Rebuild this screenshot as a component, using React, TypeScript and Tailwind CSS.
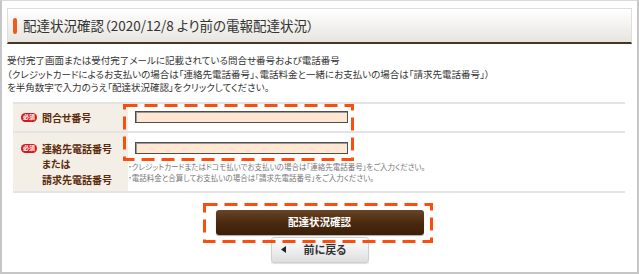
import React from "react";

const jp = "[font-family:'Noto_Sans_CJK_JP','Noto_Sans',sans-serif] [font-feature-settings:'palt']";

const Dashed = ({ className }: { className: string }) => (
  <svg className={`pointer-events-none absolute ${className}`} xmlns="http://www.w3.org/2000/svg">
    <rect
      x="1.5"
      y="1.5"
      width="calc(100% - 3px)"
      height="calc(100% - 3px)"
      fill="none"
      stroke="#fb4d0b"
      strokeWidth="3"
      strokeDasharray="13 7"
    />
  </svg>
);

const Required = () => (
  <span className="flex h-[9px] w-[16px] shrink-0 items-center justify-center rounded-full bg-[#d7161b] text-[6px] font-bold leading-none text-white">
    必須
  </span>
);

const Field = () => (
  <div className="h-[12px] w-[213px] border border-[#4d4d4d] bg-[#ffe7d1] shadow-[inset_1px_1px_0_#9a9a9a]" />
);

export default function App() {
  return (
    <div className={`relative h-[274px] w-[639px] overflow-hidden border-2 border-t border-[#c6c6c6] border-t-[#dadada] bg-white ${jp}`}>
      <div className="mx-[5px] mt-[7px] flex h-[36px] items-center border border-b-2 border-[#dedede] border-b-[#4a3322] bg-gradient-to-b from-white to-[#e7e5df] pl-[5px]">
        <span className="h-[16px] w-[4px] rounded-sm bg-[#f15a1f]" />
        <h1 className="ml-[6px] text-[13.5px] leading-none text-[#333]">
          配達状況確認（2020/12/8 より前の電報配達状況）
        </h1>
      </div>

      <p className="mt-[10px] px-[5px] text-[9.5px] leading-[13.5px] text-[#333]">
        受付完了画面または受付完了メールに記載されている問合せ番号および電話番号
        <br />
        （クレジットカードによるお支払いの場合は「連絡先電話番号」、電話料金と一緒にお支払いの場合は「請求先電話番号」）
        <br />
        を半角数字で入力のうえ「配達状況確認」をクリックしてください。
      </p>

      <div className="relative ml-[11px] mt-[7px] w-[612px] border-y-2 border-[#e4e4e4]">
        <div className="flex h-[29px] border-b-2 border-[#e4e4e4]">
          <div className="flex w-[115px] items-center gap-[5px] bg-[#f3eee6] pl-[8px]">
            <Required />
            <span className="text-[10px] font-bold text-[#5a2a0a]">問合せ番号</span>
          </div>
          <div className="flex items-center pl-[7px]">
            <Field />
          </div>
        </div>
        <div className="flex h-[58px]">
          <div className="flex w-[115px] gap-[5px] bg-[#f3eee6] pl-[8px] pt-[8px]">
            <div className="pt-[3px]">
              <Required />
            </div>
            <div className="flex flex-col text-[10px] font-bold leading-[15.5px] text-[#5a2a0a]">
              <span>連絡先電話番号</span>
              <span>または</span>
              <span>請求先電話番号</span>
            </div>
          </div>
          <div className="flex flex-col pt-[9px]">
            <div className="pl-[7px]">
              <Field />
            </div>
            <div className="mt-[7px] text-[7.5px] leading-[11px] text-[#777]">
              <div>・クレジットカードまたはドコモ払いでお支払いの場合は「連絡先電話番号」をご入力ください。</div>
              <div>・電話料金と合算してお支払いの場合は「請求先電話番号」をご入力ください。</div>
            </div>
          </div>
        </div>
        <Dashed className="left-[110px] top-[0px] h-[57px] w-[231px]" />
      </div>

      <div className="relative mt-[17px] flex flex-col items-center">
        <button className="flex h-[25px] w-[208px] items-center justify-center rounded-[3px] bg-gradient-to-b from-[#6a4527] via-[#4a2a10] to-[#3c1f08] text-[10.5px] font-bold text-white shadow-[0_1px_1px_#00000055]">
          配達状況確認
        </button>
        <button className="relative mt-[2px] flex h-[26px] w-[98px] items-center rounded-[3px] border border-[#cfcfcf] bg-gradient-to-b from-white to-[#dedede] pl-[9px] text-[11px] font-bold text-[#333] shadow-[0_1px_1px_#00000022]">
          <svg width="5" height="7" viewBox="0 0 5 7">
            <path d="M5 0 L0 3.5 L5 7 Z" fill="#222" />
          </svg>
          <span className="ml-[18px]">前に戻る</span>
        </button>
        <Dashed className="left-[201px] top-[-7px] h-[40px] w-[230px]" />
      </div>
    </div>
  );
}
